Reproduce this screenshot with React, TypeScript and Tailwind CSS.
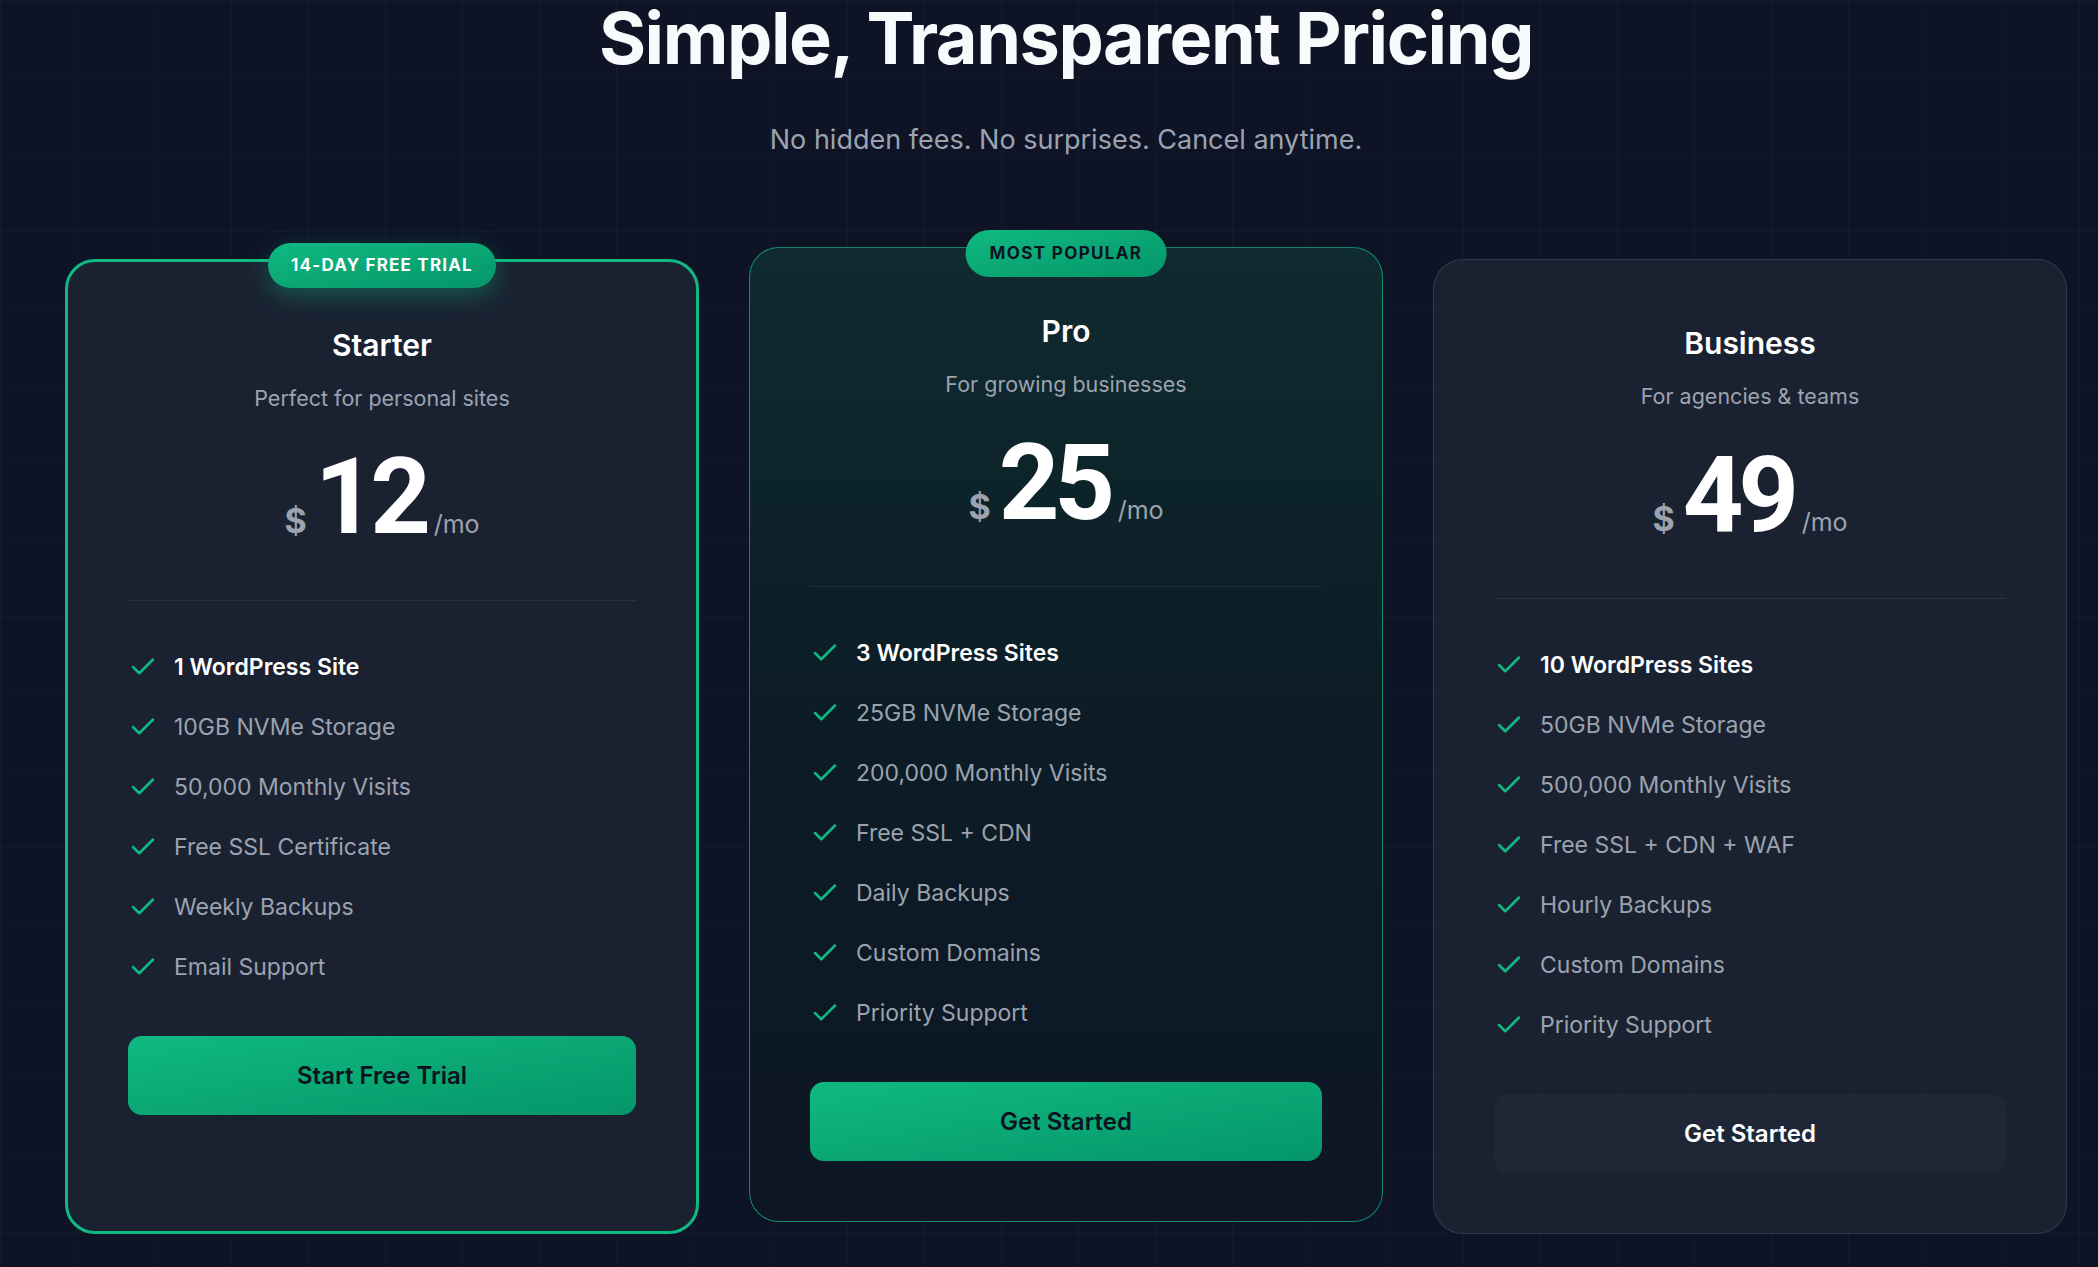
import { Check } from "lucide-react";

type Plan = {
  name: string;
  blurb: string;
  price: string;
  features: string[];
  cta: string;
  kind: "trial" | "popular" | "plain";
};

const plans: Plan[] = [
  {
    name: "Starter",
    blurb: "Perfect for personal sites",
    price: "12",
    features: [
      "1 WordPress Site",
      "10GB NVMe Storage",
      "50,000 Monthly Visits",
      "Free SSL Certificate",
      "Weekly Backups",
      "Email Support",
    ],
    cta: "Start Free Trial",
    kind: "trial",
  },
  {
    name: "Pro",
    blurb: "For growing businesses",
    price: "25",
    features: [
      "3 WordPress Sites",
      "25GB NVMe Storage",
      "200,000 Monthly Visits",
      "Free SSL + CDN",
      "Daily Backups",
      "Custom Domains",
      "Priority Support",
    ],
    cta: "Get Started",
    kind: "popular",
  },
  {
    name: "Business",
    blurb: "For agencies & teams",
    price: "49",
    features: [
      "10 WordPress Sites",
      "50GB NVMe Storage",
      "500,000 Monthly Visits",
      "Free SSL + CDN + WAF",
      "Hourly Backups",
      "Custom Domains",
      "Priority Support",
    ],
    cta: "Get Started",
    kind: "plain",
  },
];

function PlanCard({ plan }: { plan: Plan }) {
  const cardStyle =
    plan.kind === "trial"
      ? "border-[3px] border-[#10b981] bg-[#1e2636]/80"
      : plan.kind === "popular"
        ? "border border-[#10b981]/70 bg-[linear-gradient(180deg,#0f2b30_0%,#0c1d26_45%,#0e1625_100%)] -translate-y-3"
        : "border border-white/10 bg-[#1e2636]/80";

  return (
    <div className={`relative rounded-[30px] px-[60px] pt-[60px] pb-[60px] ${cardStyle}`}>
      {plan.kind === "trial" && (
        <div className="absolute -top-[19px] left-1/2 -translate-x-1/2 whitespace-nowrap rounded-full bg-gradient-to-br from-[#10b981] to-[#059669] px-[23px] py-[12px] text-[17px] leading-[21px] font-bold tracking-[0.07em] text-white shadow-[0_8px_24px_rgba(16,185,129,0.35)]">
          14-DAY FREE TRIAL
        </div>
      )}
      {plan.kind === "popular" && (
        <div className="absolute -top-[18px] left-1/2 -translate-x-1/2 whitespace-nowrap rounded-full bg-gradient-to-br from-[#10b981] to-[#059669] px-[24px] py-[13px] text-[17px] leading-[21px] font-bold tracking-[0.08em] text-[#0b1220]">
          MOST POPULAR
        </div>
      )}

      <div className="text-center">
        <h3 className="mt-[5px] text-[30px] leading-[36px] font-semibold text-white">{plan.name}</h3>
        <p className="mt-5 text-[21.5px] leading-[30px] text-[#9ca3af]">{plan.blurb}</p>
        <div className="mt-[31px] flex items-baseline justify-center gap-[8px]">
          <span className="text-[34px] font-bold text-[#9ca3af]">$</span>
          <span
            className="text-[106px] leading-none font-bold tracking-tighter text-white"
            style={{ fontFamily: "Roboto, 'Liberation Sans', sans-serif" }}
          >
            {plan.price}
          </span>
          <span className="text-[25px] text-[#9ca3af]">/mo</span>
        </div>
      </div>

      <div className="mt-[50px] border-t border-white/[0.07] pt-[48px]">
        <ul className="flex flex-col gap-[24px]">
          {plan.features.map((f, i) => (
            <li key={f} className="flex items-center gap-[16px] text-[23px] leading-[36px]">
              <Check className="h-[30px] w-[30px] shrink-0 text-[#10b981]" strokeWidth={2} />
              <span className={i === 0 ? "font-semibold text-white" : "text-[#9ca3af]"}>{f}</span>
            </li>
          ))}
        </ul>
      </div>

      <button
        className={`mt-[51px] flex h-[79px] w-full items-center justify-center rounded-[14px] text-[24px] font-semibold ${
          plan.kind === "plain"
            ? "bg-[#1f2737] text-white"
            : "bg-gradient-to-br from-[#10b981] to-[#059669] text-[#0b1220]"
        }`}
      >
        {plan.cta}
      </button>
    </div>
  );
}

export default function App() {
  return (
    <div
      className="min-h-screen w-full bg-[#0e1426] bg-[linear-gradient(rgba(255,255,255,0.022)_1px,transparent_1px),linear-gradient(90deg,rgba(255,255,255,0.022)_1px,transparent_1px)] bg-[size:77px_77px] pt-[2px] pb-10 pl-[65px] pr-[31px] text-white"
      style={{ fontFamily: "Inter, 'Noto Sans', sans-serif" }}
    >
      <h1 className="text-center text-[72px] leading-none font-bold tracking-[-0.02em] text-[#f8fafc]">
        Simple, Transparent Pricing
      </h1>
      <p className="mt-[50px] text-center text-[27px] leading-[32px] text-[#9ca3af]">
        No hidden fees. No surprises. Cancel anytime.
      </p>

      <div className="mt-[103px] grid grid-cols-3 gap-[50px]">
        {plans.map((p) => (
          <PlanCard key={p.name} plan={p} />
        ))}
      </div>
    </div>
  );
}
